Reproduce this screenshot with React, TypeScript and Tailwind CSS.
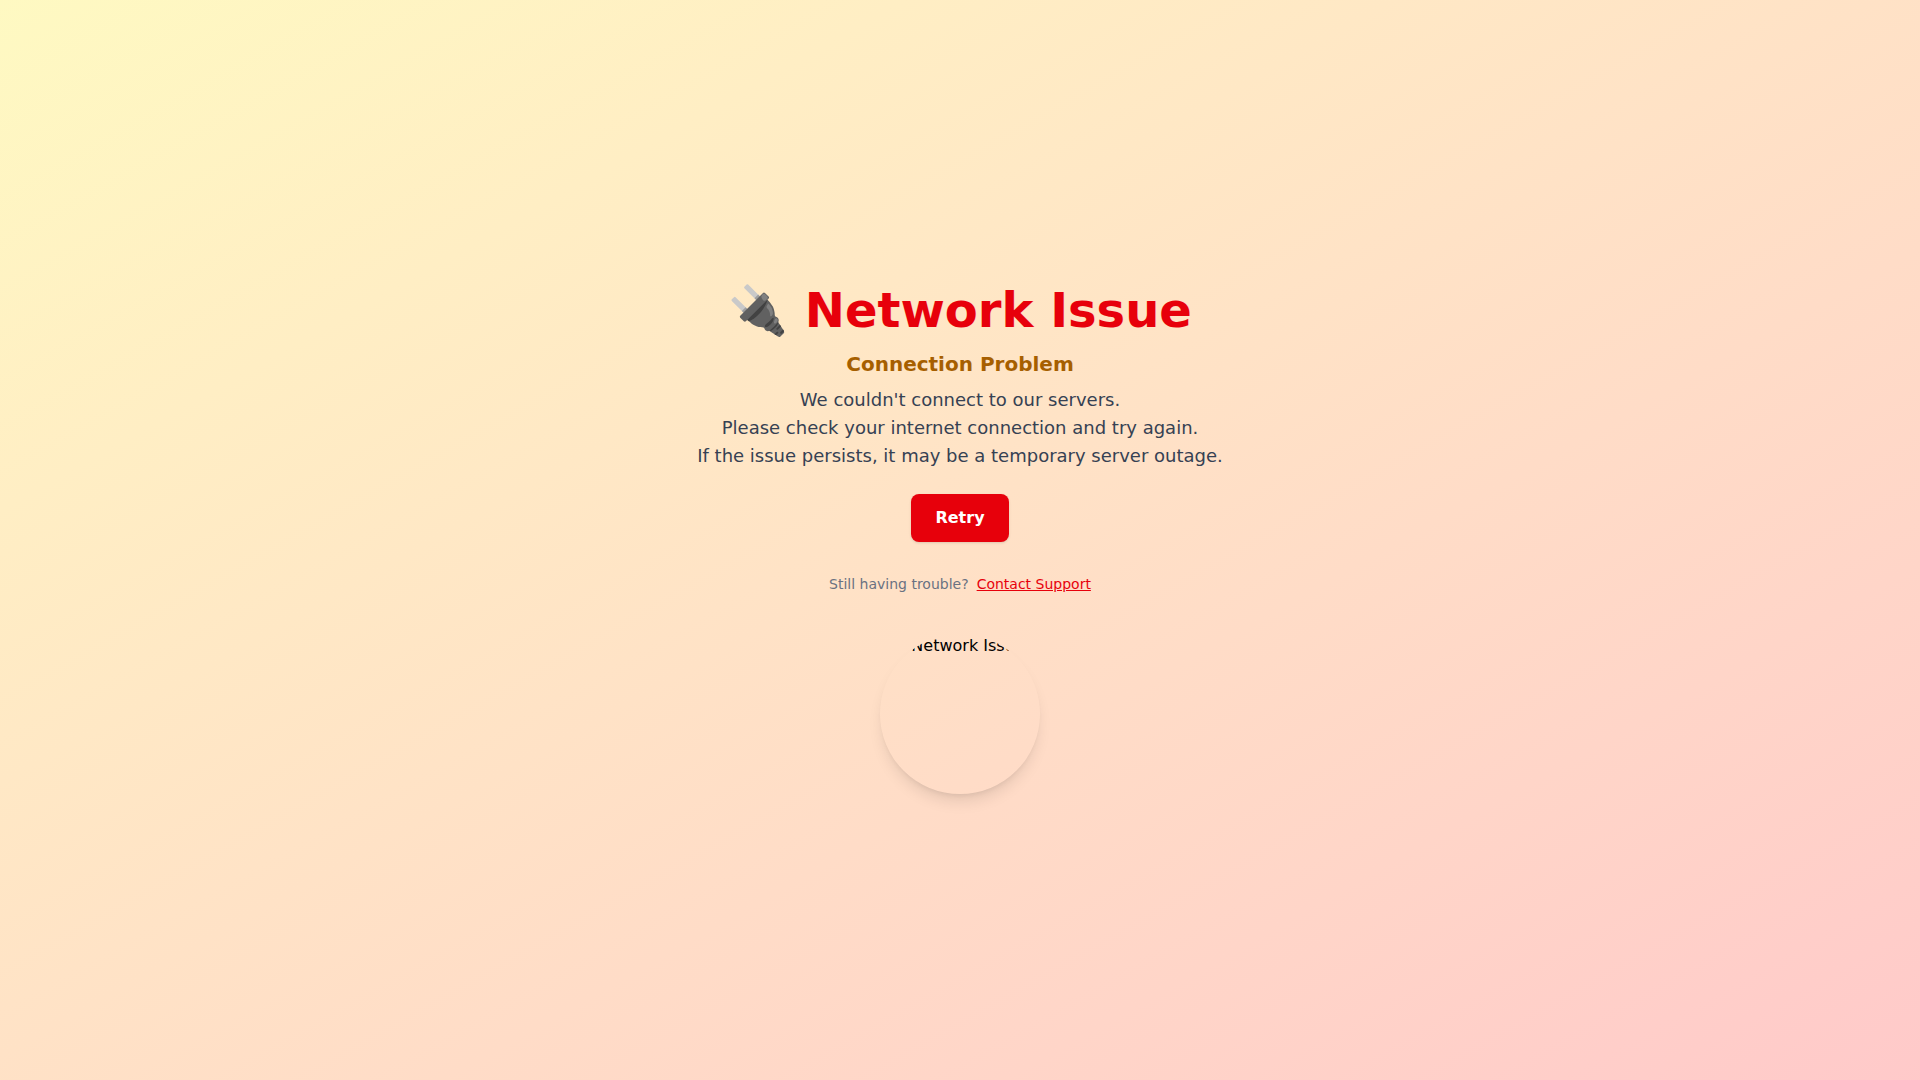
export default function App() {
  return (
    <div className="flex min-h-screen flex-col items-center justify-center bg-gradient-to-br from-yellow-100 to-red-200 px-4 text-center font-['DejaVu_Sans',sans-serif]">
      <h1 className="mb-4 text-5xl font-bold text-red-600">🔌 Network Issue</h1>
      <h2 className="mb-2 text-xl font-semibold text-yellow-700">
        Connection Problem
      </h2>
      <p className="mb-6 text-lg text-gray-700">
        We couldn't connect to our servers.
        <br />
        Please check your internet connection and try again.
        <br />
        If the issue persists, it may be a temporary server outage.
      </p>
      <button
        type="button"
        className="rounded-lg bg-red-600 px-6 py-3 font-semibold text-white shadow hover:bg-red-700"
      >
        Retry
      </button>
      <p className="mt-8 text-sm text-gray-500">
        Still having trouble?
        <a href="/support" className="ml-2 text-red-600 underline">
          Contact Support
        </a>
      </p>
      <div className="mt-10 h-40 w-40 overflow-hidden rounded-full pl-4 shadow-lg">
        Network Issue
      </div>
    </div>
  );
}
